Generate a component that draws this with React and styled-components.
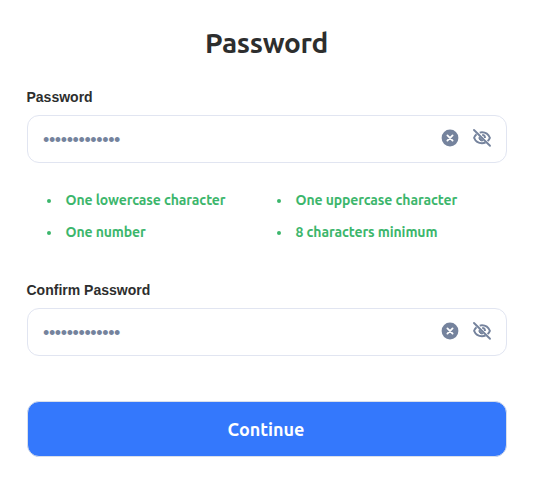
import React from "react";
import styled, { createGlobalStyle } from "styled-components";

const Global = createGlobalStyle`
  * { box-sizing: border-box; }
  body { margin: 0; background: #fff; }
`;
const display = `Ubuntu, "Noto Sans", "Open Sans", sans-serif`;

const Page = styled.main`
  width: 535px;
  height: 483px;
  padding: 23px 28px 0 27px;
  display: flex;
  flex-direction: column;
  color: #2d2e2e;
  font-family: ${display};
`;
const Title = styled.h1`
  margin: 0;
  height: 40px;
  line-height: 40px;
  text-align: center;
  font-size: 28px;
  font-weight: 600;
  letter-spacing: -0.3px;
  padding-right: 1px;
`;
const Field = styled.section`
  margin-top: ${(p) => p.$gap}px;
`;
const Label = styled.label`
  display: block;
  height: 18px;
  margin-left: -0.5px;
  font: 700 14px/18px "Liberation Sans", Arial, sans-serif;
`;
const InputBox = styled.div`
  margin-top: 9px;
  height: 48px;
  border: 1px solid #e1e5f1;
  border-radius: 12px;
  padding: 0 14px 0 15px;
  display: flex;
  align-items: center;
  color: #75839d;
`;
const Dots = styled.span`
  flex: 1;
  padding-top: 1px;
  font: 18px/20px "Liberation Sans", Arial, sans-serif;
  letter-spacing: -0.38px;
`;
const IconButton = styled.button`
  border: 0;
  padding: 0;
  background: none;
  color: inherit;
  display: flex;
  width: 20px;
  height: 20px;
  margin-left: ${(p) => p.$gap || 0}px;
  margin-bottom: 2px;
`;
const Rules = styled.ul`
  list-style: none;
  margin: 21px 0 0;
  padding: 0 0 0 19px;
  display: grid;
  grid-template-columns: 230px 1fr;
  grid-auto-rows: 32px;
`;
const Rule = styled.li`
  display: flex;
  align-items: center;
  color: #3cb66c;
  font-size: 14px;
  line-height: 20px;
  font-weight: 600;
  letter-spacing: -0.1px;
  white-space: nowrap;
  &::before {
    content: "";
    width: 4px;
    height: 4px;
    border-radius: 50%;
    background: currentColor;
    margin: 2px 14.5px 0 1px;
  }
`;
const Submit = styled.button`
  margin-top: 45px;
  height: 56px;
  flex: none;
  border: 1px solid #d9dfea;
  border-radius: 12px;
  background: #3478fc;
  color: #fff;
  padding: 0 8px 0 6px;
  font: 700 18px/24px ${display};
`;

const ClearIcon = () => (
  <svg width="20" height="20" viewBox="0 0 20 20" fill="none">
    <circle cx="10" cy="10" r="8.4" fill="currentColor" />
    <path d="m7.4 7.4 5.2 5.2m0-5.2-5.2 5.2" stroke="#fff" strokeWidth="1.8" strokeLinecap="round" />
  </svg>
);
const EyeOffIcon = () => (
  <svg width="20" height="20" viewBox="0 0 20 20" fill="none" stroke="currentColor" strokeWidth="1.9">
    <path d="M7.7 4.6A9.2 9.2 0 0 1 10 4.3c3.5 0 6.5 2.1 7.9 5.5a8.7 8.7 0 0 1-2.3 3.3" />
    <path d="M4.5 6.2a8.9 8.9 0 0 0-2.4 3.6c1.4 3.4 4.4 5.4 7.9 5.4a8.9 8.9 0 0 0 3.5-.7" />
    <path d="M10.2 6.9a3 3 0 0 1 2.8 3" />
    <path d="M7.2 8.8a3 3 0 0 0 3.9 3.9z" fill="currentColor" strokeWidth="1" />
    <path d="M2 2 18 17.8" strokeLinecap="round" />
  </svg>
);

const PasswordField = ({ label, gap }) => (
  <Field $gap={gap}>
    <Label>{label}</Label>
    <InputBox>
      <Dots>{"•".repeat(13)}</Dots>
      <IconButton aria-label="Clear"><ClearIcon /></IconButton>
      <IconButton aria-label="Show password" $gap={12}><EyeOffIcon /></IconButton>
    </InputBox>
  </Field>
);

const rules = [
  "One lowercase character",
  "One uppercase character",
  "One number",
  "8 characters minimum",
];

export default function App() {
  return (
    <Page>
      <Global />
      <Title>Password</Title>
      <PasswordField label="Password" gap={25} />
      <Rules>
        {rules.map((text) => (
          <Rule key={text}>{text}</Rule>
        ))}
      </Rules>
      <PasswordField label="Confirm Password" gap={33} />
      <Submit>Continue</Submit>
    </Page>
  );
}
